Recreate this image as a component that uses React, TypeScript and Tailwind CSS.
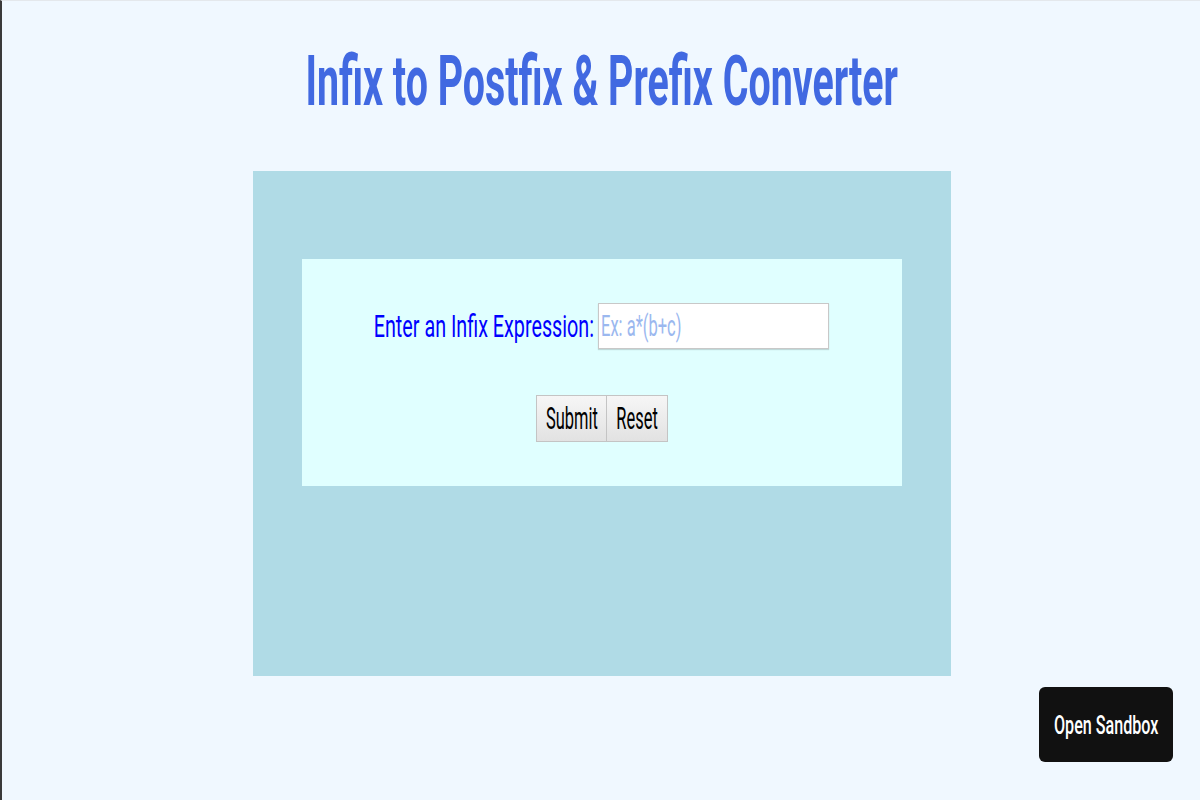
import { useState } from 'react';

const font = { fontFamily: 'Roboto, "Liberation Sans", sans-serif' };

const App = () => {
  const [expr, setExpr] = useState('');

  return (
    <div
      className="relative min-h-[800px] w-full bg-[#f0f8ff] border-l-2 border-l-[#3a3a3a] border-t border-t-[#e4e8ec] overflow-hidden"
      style={font}
    >
      <div className="flex flex-col items-center pl-[2px]">
        <h1 className="mt-[40px] h-[80px] flex items-center justify-center text-[70px] font-bold text-[#4169e1] leading-none whitespace-nowrap">
          <span className="inline-block scale-x-[0.5625]">Infix to Postfix &amp; Prefix Converter</span>
        </h1>

        <div className="mt-[50px] w-[698px] h-[505px] bg-[#b0dbe6] pt-[88px] flex flex-col items-center">
          <div className="w-[600px] h-[227px] bg-[#e0ffff] flex flex-col items-center pt-[44px]">
            <div className="flex items-center">
              <label className="text-[32px] leading-none text-[#0000ff] whitespace-nowrap w-[222px] flex justify-end pr-[3px]">
                <span className="inline-block scale-x-[0.617] origin-right">Enter an Infix Expression:</span>
              </label>
              <div className="relative ml-[1px]">
                <input
                  value={expr}
                  onChange={(e) => setExpr(e.target.value)}
                  className="w-[231px] h-[46px] bg-white border border-[#c8c8c8] shadow-[0_1px_1px_rgba(0,0,0,0.15)] px-[2px] text-[22px] outline-none"
                />
                {expr === '' && (
                  <span className="pointer-events-none absolute left-[3px] top-0 h-[46px] flex items-center text-[30px] leading-none text-[#9bb8ef] whitespace-nowrap">
                    <span className="inline-block scale-x-[0.55] origin-left">Ex: a*(b+c)</span>
                  </span>
                )}
              </div>
            </div>
            <div className="mt-[46px] flex">
              <button className="w-[71px] h-[47px] border border-[#c4c4c4] bg-gradient-to-b from-[#f6f6f6] to-[#e2e2e2] text-[31px] leading-none text-black whitespace-nowrap flex items-center justify-center">
                <span className="inline-block scale-x-[0.53]">Submit</span>
              </button>
              <button className="w-[61px] h-[47px] border border-l-0 border-[#c4c4c4] bg-gradient-to-b from-[#f6f6f6] to-[#e2e2e2] text-[31px] leading-none text-black whitespace-nowrap flex items-center justify-center">
                <span className="inline-block scale-x-[0.53]">Reset</span>
              </button>
            </div>
          </div>
        </div>
      </div>

      <button className="absolute left-[1037px] top-[686px] w-[134px] h-[75px] rounded-[6px] bg-[#111111] text-white text-[26px] leading-none font-medium whitespace-nowrap flex items-center justify-center">
        <span className="inline-block scale-x-[0.62]">Open Sandbox</span>
      </button>
    </div>
  );
};

export default App;
